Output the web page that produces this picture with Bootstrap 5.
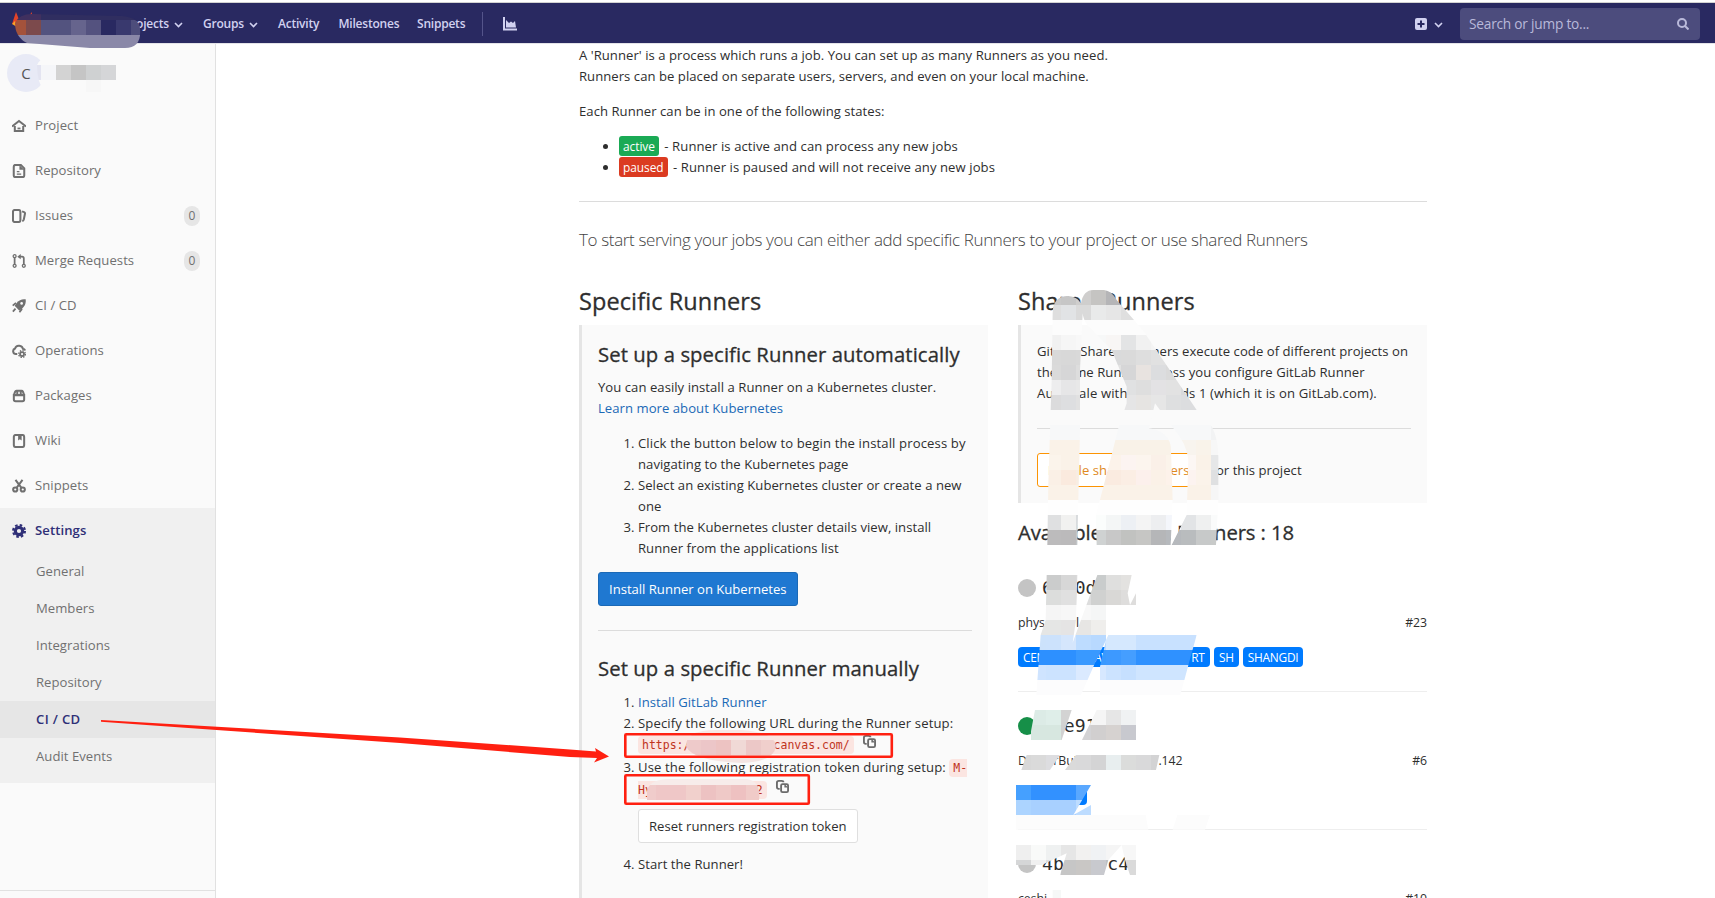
<!DOCTYPE html>
<html lang="en">
<head>
<meta charset="utf-8">
<title>CI / CD Settings</title>
<link href="https://cdn.jsdelivr.net/npm/bootstrap@5.3.0/dist/css/bootstrap.min.css" rel="stylesheet">
<style>
body{font-family:"Open Sans","Noto Sans",sans-serif;font-size:13.1px;line-height:21px;color:#2e2e2e;height:898px;overflow:hidden;position:relative;background:#fff;letter-spacing:.04px}
a{color:#1b69b6;text-decoration:none}
.topbar{height:42px;border-top:1px solid #d2d2d2;border-bottom:1px solid #e3e3e8;margin-top:2px;padding-top:1px;background:#292961;color:#d1d1f0;font-size:12px;font-weight:600;letter-spacing:-.22px;line-height:20px;white-space:nowrap}
.topbar>div:not(.searchbox){padding-top:1px}
.chev{width:9px;height:6px;margin-left:5px}
.w-pro{width:79px;margin-left:124px}.w-gr{width:75px}.w-ac{width:60.5px}.w-mi{width:78.5px}.w-sn{width:65px}
.vline{width:1px;height:24px;background:#54548a}
.chart{margin-left:20px}
.plus-chev{margin:2px 17px 0 7px}
.searchbox{width:240px;height:32px;border-radius:4px;background:#4c4c7d;color:#b9b9da;font-size:13.7px;font-weight:400;margin-right:15px;padding:1px 11px 0 9px}
.side{width:216px;height:854px;background:#fafafa;border-right:1px solid #e1e1e1;color:#707070;flex:none}
.ctx{height:59px;padding:10px 0 0 7px}
.avatar{width:38px;height:38px;border-radius:50%;background:#e8eaf6;color:#555;font-size:15px}
.s-item{height:45px;padding:0 15px 0 12px;letter-spacing:.06px}
.s-item svg{width:14px;height:14px;margin-right:9px;fill:none;stroke:#707070;stroke-width:2.3px}
.s-item .solid{fill:#707070;stroke:none}
.cnt{width:16px;height:20px;border-radius:10px;background:#e6e6e6;font-size:12px;line-height:20px;text-align:center}
.s-open{background:#f0f0f0;height:275px}
.s-open .s-item{color:#2f2f77;font-weight:600;font-size:13.1px;letter-spacing:.08px}
.s-open .s-item svg{stroke:#2f2f77}
.s-sub{height:37px;line-height:37px;padding-left:36px}
.s-sub.on{background:#e6e6e6;color:#2f2f77;font-weight:600;letter-spacing:.35px}
.s-foot{margin-top:107px;border-top:1px solid #e1e1e1}
.page{width:848px;margin-left:363px;white-space:nowrap;padding-top:.5px;height:854px}
.page p{margin-bottom:14px}
.page ul,.page ol{padding-left:40px;margin-bottom:13px}
.page ul{letter-spacing:.08px}
.wide{letter-spacing:.12px}
.dash{padding-left:2px}
.tag{display:inline-block;height:20px;line-height:21px;padding:0 4px;border-radius:3px;color:#fff;font-size:11.9px;font-weight:400;vertical-align:top;letter-spacing:-.05px}
.t-on{background:#1aaa55}.t-off{background:#db3b21}
.page hr{margin:24px 0;border-top:1px solid #dcdcdc;opacity:1}
.page ul+hr{margin:23.5px 0 24px}
.intro{font-size:17px;line-height:28px;font-weight:300;color:#444;letter-spacing:-.35px;margin:0 0 33px!important}
h3.ttl{font-size:23.5px;line-height:28px;font-weight:400;margin:0 0 10px;letter-spacing:.1px;-webkit-text-stroke:.3px #2e2e2e}
h4.ttl{font-size:20.3px;line-height:26px;font-weight:400;margin:0 0 10px;letter-spacing:.08px;-webkit-text-stroke:.3px #2e2e2e}
h4.avail{margin:16px 0 9px;letter-spacing:-.1px}
.manual{padding-top:1px}
.colw{width:409px}
.callout{border-left:3px solid #e5e5e5;background:#fafafa;padding:16px}
.c-left{height:590px}.c-right{height:178px}
.gbtn{height:34px;line-height:32px;border-radius:3px;padding:0 10px;font-size:13.1px;border:1px solid #dfdfdf;background:#fff;color:#2e2e2e;display:inline-block;letter-spacing:0}
.gbtn.blue{background:#1f78d1;border-color:#1b69b6;color:#fff;letter-spacing:-.01px}
.gbtn.orange{border-color:#fc9403;color:#e08a1e}
.cod{font-family:"DejaVu Sans Mono",monospace;font-size:11.5px;letter-spacing:0;color:#c0341d;background:#fbe5e1;padding:2px 4px;border-radius:4px;white-space:pre}
.urlrow{line-height:21.5px}
.tokrow{line-height:21.5px}
.resetrow{padding:7.5px 0 11px;line-height:0}
.cpy{width:13px;height:13px;fill:none;stroke:#6b6b6b;stroke-width:2;margin:-8px 0 0 9px}
.runner{height:138px;border-bottom:1px solid #eee;padding-top:20px}
.meta{margin:10px 0 14px;font-size:12.3px;letter-spacing:-.05px}
.dotc{width:18px;height:18px;border-radius:50%;background:#c4c4c4;margin-right:6px}
.dotc.up{background:#168f48}
.hash{font-family:"DejaVu Sans Mono",monospace;font-size:18.1px;line-height:28px;letter-spacing:0;white-space:pre}
.tag.lb{background:#007bff;font-size:11.9px;border-radius:4px;padding:0 5px;margin-right:4px;letter-spacing:-.25px}
.over{position:absolute;left:0;top:0;pointer-events:none}
</style>
</head>
<body>
<header class="topbar d-flex align-items-center">
  <div class="w-pro">Projects<svg class="chev" viewBox="0 0 9 6"><path d="M1 1l3.5 3.5L8 1" fill="none" stroke="#d1d1f0" stroke-width="1.6"/></svg></div>
  <div class="w-gr">Groups<svg class="chev" viewBox="0 0 9 6"><path d="M1 1l3.5 3.5L8 1" fill="none" stroke="#d1d1f0" stroke-width="1.6"/></svg></div>
  <div class="w-ac">Activity</div><div class="w-mi">Milestones</div><div class="w-sn">Snippets</div>
  <div class="vline"></div>
  <svg class="chart" width="14" height="14" viewBox="0 0 14 14"><path d="M1 0v12.5h13" fill="none" stroke="#d1d1f0" stroke-width="2"/><path d="M3 10.500V3l3 3 2-1.500 2 1.500 2-2 1 6.500z" fill="#d1d1f0"/></svg>
  <svg class="ms-auto" width="12" height="12" viewBox="0 0 12 12"><rect width="12" height="12" rx="2" fill="#d1d1f0"/><path d="M6 2.500v7M2.500 6h7" stroke="#292961" stroke-width="2"/></svg>
  <svg class="plus-chev" width="9" height="6" viewBox="0 0 9 6"><path d="M1 1l3.500 3.500L8 1" fill="none" stroke="#d1d1f0" stroke-width="1.6"/></svg>
  <div class="searchbox d-flex align-items-center justify-content-between"><span>Search or jump to...</span><svg width="12" height="12" viewBox="0 0 12 12" fill="none" stroke="#b9b9da" stroke-width="2"><circle cx="5" cy="5" r="4"/><path d="M8 8l3.500 3.500"/></svg></div>
</header>
<div class="d-flex">
  <nav class="side">
    <div class="ctx"><div class="avatar d-flex align-items-center justify-content-center">C</div></div>
    <div class="s-item d-flex align-items-center"><svg viewBox="0 0 16 16"><path d="M0 8.500L8 2.300l8 6.200M3.200 8v5.800h9.600V8"/><path class="solid" d="M6.300 9.800h3.400v2H6.300z"/></svg>Project</div>
    <div class="s-item d-flex align-items-center"><svg viewBox="0 0 16 16"><path d="M4 1h6l4 4v8a2 2 0 0 1-2 2H4a2 2 0 0 1-2-2V3a2 2 0 0 1 2-2z"/><path class="solid" d="M8.500 1v5.500H14z"/><path d="M5.500 8.700h3M5.500 11.500h5" style="stroke-width:1.4px"/></svg>Repository</div>
    <div class="s-item d-flex align-items-center"><svg viewBox="0 0 16 16"><rect x="1.100" y="1.100" width="8.500" height="13.800" rx="2"/><path d="M11.500 2.700l2.300.8q1.300.6 1 2L13.500 12q-.4 1.400-1.800 1.700"/></svg>Issues<span class="cnt ms-auto">0</span></div>
    <div class="s-item d-flex align-items-center"><svg viewBox="0 0 16 16"><g style="stroke-width:1.5px"><circle cx="3" cy="2.500" r="1.700"/><circle cx="3" cy="13.500" r="1.700"/><circle cx="13.500" cy="13.500" r="1.700"/></g><path d="M3 4v8M13.500 12V5q0-2-2-2H8" style="stroke-width:2px"/><path class="solid" d="M10 0v6L6 3z"/></svg>Merge Requests<span class="cnt ms-auto">0</span></div>
    <div class="s-item d-flex align-items-center"><svg viewBox="0 0 16 16"><path class="solid" d="M15.600.400Q16.500 6.500 12 10.500L8.500 13.500 3 7.800 5.500 4.300Q9.500-.5 15.600.400z"/><circle cx="11" cy="5" r="1.500" style="fill:#fafafa;stroke:none"/><path d="M4.500 4.500L.8 7.500M11.500 11.500L8.500 15.200M4 11l-3 3.500" style="stroke-width:2px"/></svg>CI / CD</div>
    <div class="s-item d-flex align-items-center"><svg viewBox="0 0 16 16"><path d="M6 11.500H4.500a3.300 3.300 0 0 1-1-6.400Q4.500 1.500 8.500 2q3.500.5 4 3.500 2 .2 2.500 2"/><circle cx="11.500" cy="11.500" r="2.300" style="stroke-width:2px"/><circle cx="11.500" cy="11.500" r="3.900" style="stroke-width:1.5px" stroke-dasharray="1.600 1.460"/></svg>Operations</div>
    <div class="s-item d-flex align-items-center"><svg viewBox="0 0 16 16"><path d="M2.100 7h11.800v5a2 2 0 0 1-2 2H4.100a2 2 0 0 1-2-2zM2.100 7l1.500-4Q4 2 5 2h6q1 0 1.500 1l1.400 4M6 2v5M10 2v5"/></svg>Packages</div>
    <div class="s-item d-flex align-items-center"><svg viewBox="0 0 16 16"><rect x="2.100" y="1.100" width="11.800" height="13.800" rx="2"/><path class="solid" d="M7 1h4v6.500L9 6 7 7.500z"/></svg>Wiki</div>
    <div class="s-item d-flex align-items-center"><svg viewBox="0 0 16 16"><circle cx="3.700" cy="12" r="2.400"/><circle cx="12.300" cy="12" r="2.400"/><path d="M4 1l7 9.500M12 1L5 10.500"/></svg>Snippets</div>
    <div class="s-open">
      <div class="s-item d-flex align-items-center"><svg viewBox="0 0 16 16"><circle cx="8" cy="8" r="4.200" style="stroke-width:3.600px"/><circle cx="8" cy="8" r="6.800" style="stroke-width:2.400px" stroke-dasharray="2.900 2.440"/></svg>Settings</div>
      <div class="s-sub">General</div><div class="s-sub">Members</div><div class="s-sub">Integrations</div><div class="s-sub">Repository</div><div class="s-sub on">CI / CD</div><div class="s-sub">Audit Events</div>
    </div>
    <div class="s-foot"></div>
  </nav>
  <main class="page">
    <p>A 'Runner' is a process which runs a job. You can set up as many Runners as you need.<br>Runners can be placed on separate users, servers, and even on your local machine.</p>
    <p>Each Runner can be in one of the following states:</p>
    <ul class="mb-0"><li><span class="tag t-on">active</span><span class="dash"> - Runner is active and can process any new jobs</span></li><li><span class="tag t-off">paused</span><span class="dash"> - Runner is paused and will not receive any new jobs</span></li></ul>
    <hr>
    <p class="intro">To start serving your jobs you can either add specific Runners to your project or use shared Runners</p>
    <div class="d-flex justify-content-between">
      <section class="colw">
        <h3 class="ttl">Specific Runners</h3>
        <div class="callout c-left">
          <h4 class="ttl">Set up a specific Runner automatically</h4>
          <p>You can easily install a Runner on a Kubernetes cluster.<br><a href="#">Learn more about Kubernetes</a></p>
          <ol><li><span class="wide">Click the button below to begin the install process by</span><br>navigating to the Kubernetes page</li><li>Select an existing Kubernetes cluster or create a new<br>one</li><li>From the Kubernetes cluster details view, install<br>Runner from the applications list</li></ol>
          <a class="gbtn blue d-table" href="#">Install Runner on Kubernetes</a>
          <hr>
          <h4 class="ttl">Set up a specific Runner manually</h4>
          <ol class="manual">
            <li><a href="#">Install GitLab Runner</a></li>
            <li><span class="wide">Specify the following URL during the Runner setup:</span><div class="urlrow"><span class="cod">https://           canvas.com/</span><svg class="cpy" viewBox="0 0 14 14"><path d="M4 9.500H3a2 2 0 0 1-2-2V3a2 2 0 0 1 2-2h3q2 0 2 1.500"/><rect x="5.500" y="4.500" width="7.500" height="8.500" rx="1.500"/><path d="M9 4v4h4z" fill="#6b6b6b" stroke="none"/></svg></div></li>
            <li class="tokrow"><span class="wide">Use the following registration token during setup:</span> <span class="cod">M-<br>Hy               2</span><svg class="cpy" viewBox="0 0 14 14"><path d="M4 9.500H3a2 2 0 0 1-2-2V3a2 2 0 0 1 2-2h3q2 0 2 1.500"/><rect x="5.500" y="4.500" width="7.500" height="8.500" rx="1.500"/><path d="M9 4v4h4z" fill="#6b6b6b" stroke="none"/></svg><div class="resetrow"><span class="gbtn">Reset runners registration token</span></div></li>
            <li>Start the Runner!</li>
          </ol>
        </div>
      </section>
      <section class="colw">
        <h3 class="ttl">Shared Runners</h3>
        <div class="callout c-right">
          <p class="mb-0">GitLab Shared Runners execute code of different projects on<br>the same Runner unless you configure GitLab Runner<br><span class="wide">Autoscale with MaxBuilds 1 (which it is on GitLab.com).</span></p>
          <hr>
          <div class="d-flex align-items-center"><span class="gbtn orange">Enable shared Runners</span><span style="padding-left:11px">for this project</span></div>
        </div>
        <h4 class="ttl avail">Available shared Runners : 18</h4>
        <div class="runner"><div class="d-flex align-items-center"><span class="dotc"></span><span class="hash">6  0d</span></div><div class="meta d-flex justify-content-between"><span>phys<span style="margin-left:31px">l</span></span><span>#23</span></div><div class="d-flex"><span class="tag lb" style="width:192px">CEN <span style="margin-left:46px">AV</span><span style="margin-left:83px">RT</span></span><span class="tag lb">SH</span><span class="tag lb">SHANGDI</span></div></div>
        <div class="runner"><div class="d-flex align-items-center"><span class="dotc up"></span><span class="hash">  e91</span></div><div class="meta d-flex justify-content-between"><span>DockerBuild <span style="margin-left:68px">.142</span></span><span>#6</span></div><div><span class="tag lb" style="width:69px">&nbsp;</span></div></div>
        <div class="runner"><div class="d-flex align-items-center"><span class="dotc"></span><span class="hash">4b    c4</span></div><div class="meta d-flex justify-content-between"><span>ceshi</span><span>#10</span></div></div>
      </section>
    </div>
  </main>
</div>

<svg class="over" id="over" width="1715" height="898" viewBox="0 0 1715 898">
  <defs>
    <clipPath id="c-logo"><path d="M15 23Q19 14 32 14L122 16Q138 17 140 28Q142 48 125 48H90L27 43Q15 37 15 23z"/></clipPath>
    <clipPath id="c-ctx"><path d="M37 65q4-8 12-8h67v35H45q-8-9-8-27z"/></clipPath>
    <clipPath id="c-url"><path d="M686 746q0-16 30-16h25q34 2 35 16-2 16-34 17-50-2-56-17z"/></clipPath>
    <clipPath id="c-tok"><path d="M647 791q2-11 20-12h80q14 2 12 21H647z"/></clipPath>
    <clipPath id="c-sh"><path transform="translate(1000 270) scale(.33333)" d="M158 130Q158 78 205 78Q232 80 243 100Q250 60 280 60H312Q335 62 350 90L402 150L435 190L590 420L636 470Q655 510 655 560V690L648 825H515L560 735L565 570Q560 520 520 475L465 400L447 475Q512 485 513 540L518 690L512 825H290L288 735L335 555L355 475L380 400V350L335 240L262 165Q250 150 248 130L240 300V480L235 690L232 825H142L145 640L155 330z"/></clipPath>
    <clipPath id="c-r1"><path transform="translate(1000 560) scale(.33333)" d="M140 45H232L228 180 218 248 292 45H395L383 100 390 135 408 100V135H318V240L325 225 590 225 565 316 541 405H300V320L318 240 280 320 243 405H109L122 225 137 180z"/></clipPath>
    <clipPath id="c-r2"><path transform="translate(1000 560) scale(.33333)" d="M105 450H215L185 540H88zM290 450H408V540H246zM80 585H180L150 630H64zM228 585H478L468 630H195zM48 675H273L220 765 273 735V765H437L445 809H48zM532 765H630L615 809H518z"/></clipPath>
    <clipPath id="c-r3"><path transform="translate(1000 560) scale(.33333)" d="M48 855H408V945H390L375 900 365 855 325 900 312 945H180L200 880 125 915H48zM158 990H183V1014H158z"/></clipPath>
  </defs>
  <path d="M12 24L16 12l4 10zM29 17l2.500-5 2 7z" fill="#e24329"/><path d="M12 24l3-3 2 6z" fill="#fca326"/>
  <g id="mosaic"></g>
  <g fill="none" stroke="#ff2011" stroke-width="2.600">
    <rect x="625.300" y="734.300" width="266.500" height="22.500" rx="1"/>
    <rect x="625.300" y="775.300" width="183.500" height="28.500" rx="1"/>
  </g>
  <path d="M101 720L400 737.500L570 749.500L596 751.500L595 748L609 756.500L594 762.500L597 758L570 757L400 743L220 730.300L101 721.800z" fill="#ff2011"/>
</svg>
<script>
// Each redaction patch: clip id, left, top, then rows of 15px cells ("-" leaves a cell empty, "*n" repeats a colour)
const patches = [
 ["c-logo",11,5,["#40305f*2 #302e60*7","#a4523b #7c4a4c #53537f*2 #66648d #54527f #292961 #39396e #4d4d7b","#8a88a8*9"]],
 ["c-ctx",26,50,["#fafafa*7","#e3e4f1 #f5f6f9 #d3d3d3 #c5c5c5 #cfd1d2 #d5d6d8 #fafafa","#fafafa*4 #f7f7f7 #fafafa*2"]],
 ["c-url",686,725,["#f7e6e4*6","#eecaca #ecc6c8 #edc3c2 #f0d9d6 #ecc8c7 #f0cfcc","#f4e4e2*6"]],
 ["c-tok",641,770,["#f7ecea*8","#f0cccb #efc7c7 #efc7c7 #f1d0cc #edc2c2 #efc9c7 #eec1c1 #f0cbc8"]],
 ["c-sh",1046,290,[
  "#c9c9c9 #c6c6c6 #cfcecd #c5c4c2 #b5b5b7 #c0c0c0*3",
  "#dedede #e1e3e5 #dadada #e9eaea #e6e6e6 #dfdfdf #d5d5d5*2",
  "#fcfcfc*12","#f1f1f1 #f6f6f6 #f8f8f8 #f7f8f8 #f8f6f5 #e3e4e5 #f1f1f1 #f4f4f4*5",
  "#d9d9d9 #d8d8d8 #d9d9d9 #e2e2e2 #d9dadb #dadada #dedede #e1e1e1*5",
  "#dadada #d6d6d7 #dddddd #e0e0e0 #e2e2e2 #d6d6d7 #e8e3e0 #dcdddf #dadada*4",
  "#ededee #e6e6e7 #e8e8e8*3 #e0e1e2 #dedede #e3e2e4 #e2e2e2 #d8d9db*3",
  "#dbdbdc #dddee0 #e1e1e1*3 #e5e5e6 #e6e4e2 #e6e6e6 #dedfe0 #dcdddf*3",
  "#fafafa*12","#f7f8f9*11 #f2f3f4","#faf2e8*4 #f9f2e8*5 #f8f4ee #f9f3ea #f7f7f7",
  "#fbf4eb #faf2e8*3 #fcf3ea #fcf4f1 #fcf5ee #faf0e8 #fbf4eb #fcf7f4 #faf2e8 #e6e7e8",
  "#faf0e6 #faeade #f8ede2*2 #faebe0 #fbeee4 #fcf0ec #fbf1e7 #fdf2ea #fcf3f0 #fbf3ea #dfe0e1",
  "#faf2e8*11 #f6f6f6","#fefefe*12",
  "#dfe0e1 #f1f1f0 #d8dbdd #fbfdfc #f4f6f6 #edf0f4 #f4f4f4 #edeef0 #f4f6fb #e2e4e6 #eff0f0 #fafbfb",
  "#bcbbbc #bbbabb #c2c5c7 #cfd2d2 #c8c8c8 #c1c2c0 #c6c6c4 #b5b6b8 #b6b9bd #b9bcbe #c7c9c9 #c8cac9"]],
 ["c-r1",1031,575,["- #cbcccc #d7d7d7 #dadada #c9cccc #dfdfde #e3e2e0 #f1f3f4 #f7f7f7","- #dcdddc #e0e0e0 #dddddd #d0d1d0 #d9d8d6 #dedddc #e8e8e9 #f2f2f2",
  "#f5f5f5*2 #f7f7f7 #f8f8f8 #f5f6f6 #f7f6f6*4","#e5e6e5*2 #e5e4e4 #e7e6e4 #efeeec #e7e7e7*4",
  "#cce2fb #cce2fc #d5e6fc #bddcff #b8d9ff #d5e8fe*2 #c8e1ff*4 #d8e9ff*2","#2d90ff*3 #3999ff*2 #3d99ff #459eff #2f91ff*4 #439cff*2",
  "#cfe4ff #cce3ff*2 #dbeaff #d7e8ff #cce3ff #c6e0ff #cfe5ff*4 #dfedff*2","#fcfcfd*13"]],
 ["c-r2",1016,710,["- #dcebe6 #dfeee9 #d3d3d3 #e9e9ea #f5f5f5 #e6e6e6 #f0f2f3 #ececed #f0f0f0 #ededed","- #d7e7e0 #d7e7e0 #d1d1d1 #d3d3d5 #d1cfcf #d6d2d0 #c8c9cf #d6d4d2 #cccccd #dadada",
  "#fff*11","#d8d8d8 #dadada #dddde0 #dadada #d9d9da #d4d4d5 #e8eeef #dbdcdb #d9d9da #d3d3d4","#fff*11",
  "#45a0ff #3291ff*3 #5aa8ff #5baaff","#acd4ff #a8d0ff*3 #bddcff #c2dfff","#fcfcfc*14"]],
 ["c-r3",1016,845,["#efefef #f9faf9 #eff1f1 #e6e6e6 #f2f1f0 #f0f2f4 #f5f5f5 #f7f7f7","#d5d6d7 #f0f0f0 #ddd #c6c6c6 #c9c7c5 #c8c9ce #bcc1c5 #dadada","#fff*8","#fff*2 #f6f8f7*3"]]
];
const ns="http://www.w3.org/2000/svg", root=document.getElementById("mosaic");
for(const [clip,x0,y0,rows] of patches){
  const g=document.createElementNS(ns,"g"); g.setAttribute("clip-path","url(#"+clip+")"); g.setAttribute("shape-rendering","crispEdges");
  rows.forEach((row,r)=>{ let c=0;
    for(const t of row.split(" ")){ const [col,n]=t.split("*"), k=+(n||1);
      if(col!=="-"){ const e=document.createElementNS(ns,"rect");
        e.setAttribute("x",x0+c*15); e.setAttribute("y",y0+r*15); e.setAttribute("width",k*15); e.setAttribute("height",15); e.setAttribute("fill",col); g.appendChild(e); }
      c+=k; } });
  root.appendChild(g);
}
</script>
<script src="https://cdn.jsdelivr.net/npm/bootstrap@5.3.0/dist/js/bootstrap.bundle.min.js"></script>
</body>
</html>
